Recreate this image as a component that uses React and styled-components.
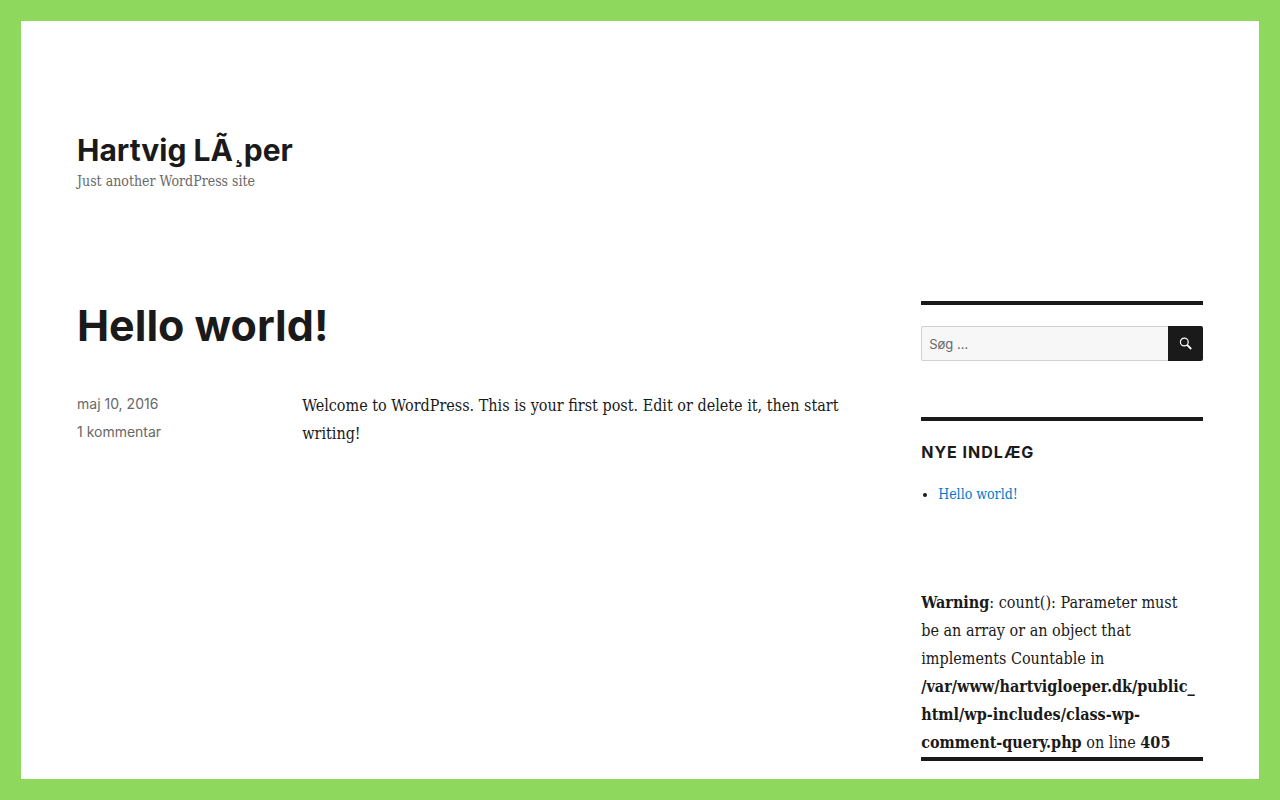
import React from "react";
import styled, { createGlobalStyle } from "styled-components";

const ink = "#1a1a1a";
const muted = "#686868";
const sans = `Inter, "Open Sans", sans-serif`;
const serif = `"DejaVu Serif Condensed", "DejaVu Serif", serif`;

const GlobalStyle = createGlobalStyle`
  *, *::before, *::after { box-sizing: border-box; }
  body {
    margin: 0;
    background: #fff;
    color: ${ink};
    font-family: ${serif};
    font-size: 16px;
    line-height: 28px;
  }
`;

const Page = styled.div`
  min-height: 100vh;
  border: 21px solid #8fd85e;
  background: #fff;
  padding: 0 56px;
`;

const Header = styled.header`
  padding: 111px 0 111px;
`;

const SiteTitle = styled.p`
  margin: 0;
  font: 700 30px/36px ${sans};
`;

const SiteLink = styled.a`
  color: ${ink};
  text-decoration: none;
`;

const Tagline = styled.p`
  margin: 4px 0 0;
  color: ${muted};
  font-size: 14px;
  line-height: 18px;
`;

const Columns = styled.div`
  display: grid;
  grid-template-columns: 70% 25%;
  column-gap: 56px;
  align-items: start;
`;

const PostTitle = styled.h1`
  margin: 0 0 43px;
  font: 700 43px/48px ${sans};
`;

const PostBody = styled.div`
  display: grid;
  grid-template-columns: 2fr 5fr;
`;

const Meta = styled.footer`
  display: flex;
  flex-direction: column;
  align-items: flex-start;
  font: 400 14px/28px ${sans};
  margin-top: -2px;
`;

const MetaLink = styled.a`
  color: ${muted};
  text-decoration: none;
`;

const Text = styled.p`
  margin: 0;
`;

const Widget = styled.section`
  border-top: 4px solid ${ink};
  padding-top: ${(p) => (p.$flush ? "0" : "21px")};
  margin-bottom: ${(p) => (p.$flush ? "0" : "56px")};
`;

const SearchForm = styled.form`
  display: flex;
  height: 35px;
`;

const SearchInput = styled.input`
  flex: 1;
  min-width: 0;
  padding: 0 7px;
  border: 1px solid #d1d1d1;
  border-right-width: 0;
  border-radius: 2px 0 0 2px;
  background: #f7f7f7;
  color: ${muted};
  font: 400 13px/20px ${sans};
  &::placeholder { color: ${muted}; opacity: 1; }
`;

const SearchButton = styled.button`
  display: flex;
  align-items: center;
  justify-content: center;
  width: 35px;
  padding: 0;
  border: 0;
  border-radius: 0 2px 2px 0;
  background: ${ink};
  color: #fff;
`;

const WidgetTitle = styled.h2`
  margin: 0 0 21px;
  font: 700 16px/21px ${sans};
  letter-spacing: 1px;
  text-transform: uppercase;
`;

const PostList = styled.ul`
  margin: 0;
  padding: 0 0 28px 17px;
  font-size: 14px;
  line-height: 21px;
`;

const ListLink = styled.a`
  color: #007acc;
  text-decoration: none;
`;

export default function App() {
  return (
    <>
      <GlobalStyle />
      <Page>
        <Header>
          <SiteTitle>
            <SiteLink href="#">Hartvig LÃ¸per</SiteLink>
          </SiteTitle>
          <Tagline>Just another WordPress site</Tagline>
        </Header>
        <Columns>
          <main>
            <article>
              <PostTitle>
                <SiteLink href="#">Hello world!</SiteLink>
              </PostTitle>
              <PostBody>
                <Meta>
                  <MetaLink href="#">maj 10, 2016</MetaLink>
                  <MetaLink href="#">1 kommentar</MetaLink>
                </Meta>
                <Text>
                  Welcome to WordPress. This is your first post. Edit or delete it, then start writing!
                </Text>
              </PostBody>
            </article>
          </main>
          <aside>
            <Widget>
              <SearchForm role="search" onSubmit={(e) => e.preventDefault()}>
                <SearchInput type="search" placeholder="Søg …" aria-label="Søg" />
                <SearchButton type="submit" aria-label="Søg">
                  <svg width="14" height="14" viewBox="0 0 14 14" fill="none" stroke="currentColor">
                    <circle cx="6.3" cy="5" r="3.9" strokeWidth="1.2" />
                    <path d="M9.1 7.8 13.2 12" strokeWidth="1.8" />
                  </svg>
                </SearchButton>
              </SearchForm>
            </Widget>
            <Widget>
              <WidgetTitle>Nye indlæg</WidgetTitle>
              <PostList>
                <li>
                  <ListLink href="#">Hello world!</ListLink>
                </li>
              </PostList>
            </Widget>
            <Text>
              <b>Warning</b>: count(): Parameter must be&nbsp;an array or an object that implements
              Countable in <b>/var/www/hartvigloeper.dk/public_<wbr />html/wp-includes/class-wp-comment-query.php</b>{" "}
              on line <b>405</b>
            </Text>
            <Widget $flush />
          </aside>
        </Columns>
      </Page>
    </>
  );
}
